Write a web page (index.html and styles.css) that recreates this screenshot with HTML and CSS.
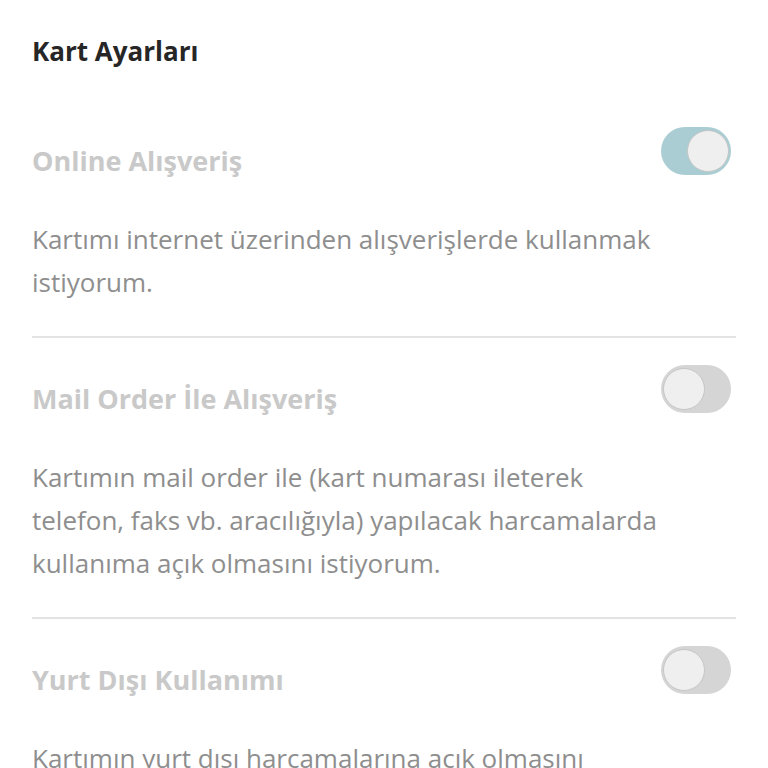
FILE: index.html
```html
<!DOCTYPE html>
<html lang="tr">
<head>
<meta charset="utf-8">
<link rel="stylesheet" href="styles.css">
</head>
<body>
<div class="page">
  <h1 class="page-title">Kart Ayarları</h1>

  <div class="setting">
    <div class="setting-head">
      <span class="setting-name">Online Alışveriş</span>
      <span class="toggle on"><span class="knob"></span></span>
    </div>
    <p class="setting-desc">Kartımı internet üzerinden alışverişlerde kullanmak istiyorum.</p>
  </div>

  <div class="setting">
    <div class="setting-head">
      <span class="setting-name">Mail Order İle Alışveriş</span>
      <span class="toggle"><span class="knob"></span></span>
    </div>
    <p class="setting-desc">Kartımın mail order ile (kart numarası ileterek telefon, faks vb. aracılığıyla) yapılacak harcamalarda kullanıma açık olmasını istiyorum.</p>
  </div>

  <div class="setting">
    <div class="setting-head">
      <span class="setting-name">Yurt Dışı Kullanımı</span>
      <span class="toggle"><span class="knob"></span></span>
    </div>
    <p class="setting-desc">Kartımın yurt dışı harcamalarına açık olmasını istiyorum.</p>
  </div>
</div>
</body>
</html>
```

FILE: styles.css
```css
body {
    margin: 0;
    background: #ffffff;
    font-family: "Open Sans", "Noto Sans", sans-serif;
}

.page {
    padding: 33px 32px 0 32px;
}

.page-title {
    margin: 0;
    font-size: 26px;
    line-height: 36px;
    font-weight: 700;
    color: #262626;
}

.setting {
    border-bottom: 2px solid #e3e3e3;
    padding-bottom: 32px;
}

.setting-head {
    display: flex;
    justify-content: space-between;
    align-items: flex-start;
    margin-top: 27px;
    padding-right: 5px;
}

.page-title + .setting .setting-head {
    margin-top: 58px;
}

.setting-name {
    font-size: 27px;
    line-height: 36px;
    font-weight: 700;
    color: #c9c9c9;
    padding-top: 16px;
}

.setting-desc {
    margin: 39px 0 0 0;
    font-size: 26px;
    line-height: 43px;
    color: #8e8e8e;
    max-width: 642px;
}

.toggle {
    width: 70px;
    height: 48px;
    border-radius: 24px;
    background: #d5d5d5;
    display: flex;
    align-items: center;
    padding: 0 2px;
    box-sizing: border-box;
}

.toggle.on {
    background: #a9cdd3;
    justify-content: flex-end;
}

.knob {
    width: 42px;
    height: 42px;
    border-radius: 50%;
    background: #efefef;
    border: 1px solid #c6c6c6;
    box-sizing: border-box;
}
```
